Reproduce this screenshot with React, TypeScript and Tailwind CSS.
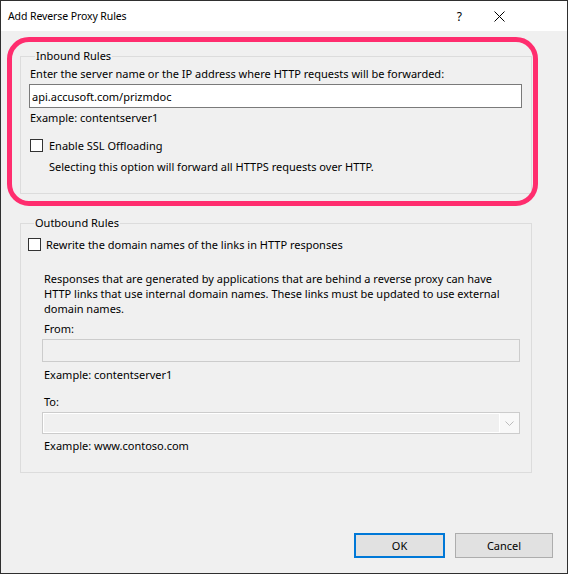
import React from "react";

function CheckBox() {
  return <span className="inline-block w-[13px] h-[13px] bg-white border border-[#333333] shrink-0" />;
}

export default function App() {
  return (
    <div className="relative w-[568px] h-[574px] border border-[#2f2f2f] bg-[#f0f0f0] flex flex-col font-['Noto_Sans','Liberation_Sans',sans-serif] text-[11px] leading-[15px] text-black overflow-hidden">
      {/* Title bar */}
      <div className="h-[30px] bg-white flex items-center shrink-0">
        <span className="ml-[7px] text-[10.5px] tracking-[-0.1px]">Add Reverse Proxy Rules</span>
        <span className="ml-auto mr-[32px] text-[12px]">?</span>
        <svg width="11" height="11" viewBox="0 0 11 11" className="mr-[62px]">
          <path d="M0.5 0.5 L10.5 10.5 M10.5 0.5 L0.5 10.5" stroke="#000" strokeWidth="1" fill="none" />
        </svg>
      </div>

      {/* Body */}
      <div className="flex flex-col flex-1 pt-[17px] pl-[19px]">
        {/* Inbound */}
        <fieldset className="w-[512px] border border-[#dcdcdc] pl-[8px] pr-[9px] pb-[19px]">
          <legend className="ml-[6px] px-[1px] leading-[16px]">Inbound Rules</legend>
          <div className="mt-[2px] pl-[1px]">Enter the server name or the IP address where HTTP requests will be forwarded:</div>
          <div className="mt-[3px] h-[24px] border border-[#7a7a7a] bg-white flex items-center pl-[2px]">
            api.accusoft.com/prizmdoc
          </div>
          <div className="mt-[2px] pl-[1px]">Example: contentserver1</div>
          <div className="mt-[13px] flex items-center pl-[1px] h-[15px]">
            <CheckBox />
            <span className="ml-[6px]">Enable SSL Offloading</span>
          </div>
          <div className="mt-[6px] pl-[20px]">Selecting this option will forward all HTTPS requests over HTTP.</div>
        </fieldset>

        {/* Outbound */}
        <fieldset className="mt-[21px] w-[512px] border border-[#dcdcdc] pl-[7px] pr-[11px] pb-[19px]">
          <legend className="ml-[6px] px-[1px] leading-[16px]">Outbound Rules</legend>
          <div className="mt-[6px] flex items-center h-[15px]">
            <CheckBox />
            <span className="ml-[5px]">Rewrite the domain names of the links in HTTP responses</span>
          </div>
          <div className="pl-[14px]">
            <div className="mt-[19px] pl-[2px] whitespace-nowrap">
              Responses that are generated by applications that are behind a reverse proxy can have
              <br />
              HTTP links that use internal domain names. These links must be updated to use external
              <br />
              domain names.
            </div>
            <div className="mt-[5px] pl-[2px]">From:</div>
            <div className="mt-[3px] h-[23px] border border-[#cccccc] bg-[#f0f0f0]" />
            <div className="mt-[5px] pl-[2px]">Example: contentserver1</div>
            <div className="mt-[12px] pl-[2px]">To:</div>
            <div className="mt-[3px] h-[22px] border border-[#cccccc] bg-[#f0f0f0] flex">
              <div className="flex-1 border border-white" />
              <div className="w-[19px] bg-[#f8f8f8] flex items-center justify-center">
                <svg width="9" height="5" viewBox="0 0 9 5">
                  <path d="M0.5 0.5 L4.5 4.5 L8.5 0.5" stroke="#bcbcbc" strokeWidth="1" fill="none" />
                </svg>
              </div>
            </div>
            <div className="mt-[4px] pl-[2px]">Example: www.contoso.com</div>
          </div>
        </fieldset>

        {/* Buttons */}
        <div className="mt-auto flex justify-end gap-[10px] pr-[14px] pb-[15px]">
          <button className="w-[91px] h-[25px] border-2 border-[#0078d7] bg-[#e1e1e1] text-[11px]">OK</button>
          <button className="w-[98px] h-[25px] border border-[#adadad] bg-[#e1e1e1] text-[11px]">Cancel</button>
        </div>
      </div>

      {/* Annotation highlight */}
      <div className="absolute left-[6px] top-[36px] w-[531px] h-[169px] border-[5px] border-[#ff2d6e] rounded-[22px] pointer-events-none" />
    </div>
  );
}
